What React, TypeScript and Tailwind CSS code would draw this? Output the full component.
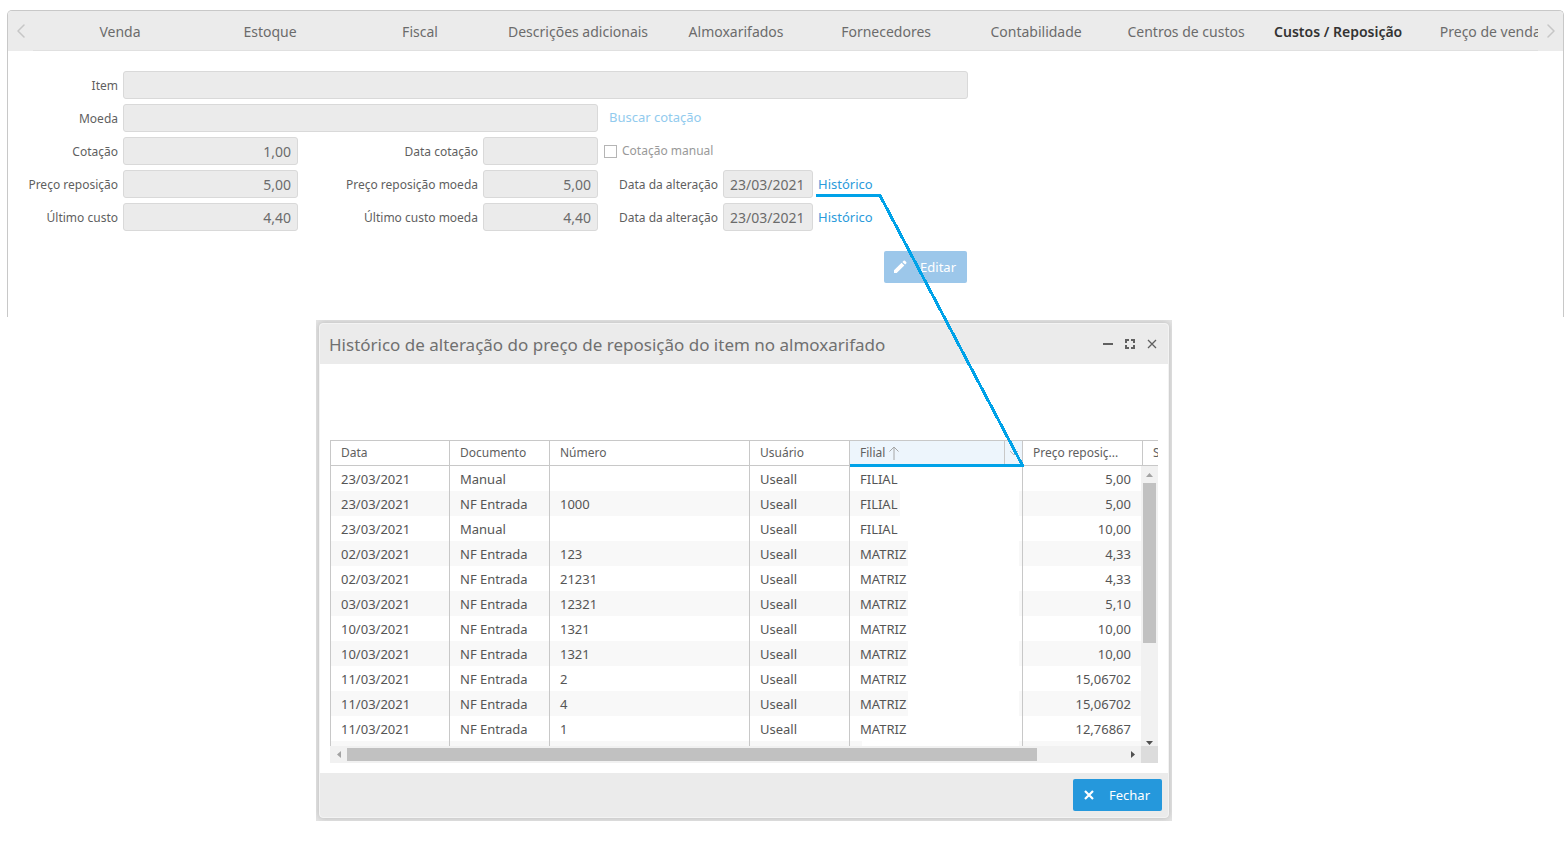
import { ReactNode } from 'react';
import { ChevronLeft, ChevronRight } from 'lucide-react';
import clsx from 'clsx';

const TABS = [
  'Venda',
  'Estoque',
  'Fiscal',
  'Descrições adicionais',
  'Almoxarifados',
  'Fornecedores',
  'Contabilidade',
  'Centros de custos',
  'Custos / Reposição',
  'Preço de venda',
];

const ACTIVE_TAB = 'Custos / Reposição';

type HistoryRow = {
  date: string;
  document: string;
  number: string;
  user: string;
  branch: string;
  price: string;
};

const ROWS: HistoryRow[] = [
  { date: '23/03/2021', document: 'Manual', number: '', user: 'Useall', branch: 'FILIAL', price: '5,00' },
  { date: '23/03/2021', document: 'NF Entrada', number: '1000', user: 'Useall', branch: 'FILIAL', price: '5,00' },
  { date: '23/03/2021', document: 'Manual', number: '', user: 'Useall', branch: 'FILIAL', price: '10,00' },
  { date: '02/03/2021', document: 'NF Entrada', number: '123', user: 'Useall', branch: 'MATRIZ', price: '4,33' },
  { date: '02/03/2021', document: 'NF Entrada', number: '21231', user: 'Useall', branch: 'MATRIZ', price: '4,33' },
  { date: '03/03/2021', document: 'NF Entrada', number: '12321', user: 'Useall', branch: 'MATRIZ', price: '5,10' },
  { date: '10/03/2021', document: 'NF Entrada', number: '1321', user: 'Useall', branch: 'MATRIZ', price: '10,00' },
  { date: '10/03/2021', document: 'NF Entrada', number: '1321', user: 'Useall', branch: 'MATRIZ', price: '10,00' },
  { date: '11/03/2021', document: 'NF Entrada', number: '2', user: 'Useall', branch: 'MATRIZ', price: '15,06702' },
  { date: '11/03/2021', document: 'NF Entrada', number: '4', user: 'Useall', branch: 'MATRIZ', price: '15,06702' },
  { date: '11/03/2021', document: 'NF Entrada', number: '1', user: 'Useall', branch: 'MATRIZ', price: '12,76867' },
  { date: '', document: '', number: '', user: '', branch: '', price: '' },
];

function Field({
  id,
  label,
  value = '',
  align = 'right',
  className,
}: {
  id: string;
  label: string;
  value?: string;
  align?: 'left' | 'right';
  className?: string;
}) {
  return (
    <>
      <label htmlFor={id} className="pt-[2px] text-right whitespace-nowrap">
        {label}
      </label>
      <input
        id={id}
        type="text"
        readOnly
        defaultValue={value}
        className={clsx(
          'h-7 w-full min-w-0 rounded-[3px] border border-[#d9d9d9] bg-[#ebebeb] px-[6px] text-[14px] text-[#6b6b6b] outline-none',
          align === 'right' ? 'text-right' : 'text-left',
          className,
        )}
      />
    </>
  );
}

function HistoryLink() {
  return (
    <a href="#historico" className="pt-[2px] text-[13px] text-[#2b9bdb]">
      Histórico
    </a>
  );
}

function Tabs() {
  return (
    <nav className="flex h-10 rounded-t-[4px] bg-[#ebebeb]">
      <button type="button" aria-label="Anterior" className="flex w-[25px] shrink-0 items-center justify-center text-[#c6c6c6]">
        <ChevronLeft className="h-6 w-6" strokeWidth={1.5} />
      </button>
      <div role="tablist" className="flex min-w-0 flex-1 overflow-hidden border-b border-[#e0e0e0] pl-3">
        {TABS.map((tab) => (
          <button
            key={tab}
            type="button"
            role="tab"
            aria-selected={tab === ACTIVE_TAB}
            className={clsx(
              'min-w-[150px] shrink-0 px-[13px] pt-[2px] text-[14px] whitespace-nowrap',
              tab === ACTIVE_TAB ? 'px-0 font-semibold text-[#333333]' : 'text-[#6b6b6b]',
            )}
          >
            {tab}
          </button>
        ))}
      </div>
      <button type="button" aria-label="Próximo" className="flex w-[25px] shrink-0 items-center justify-center text-[#c6c6c6]">
        <ChevronRight className="h-6 w-6" strokeWidth={1.5} />
      </button>
    </nav>
  );
}

function CostForm() {
  return (
    <form className="w-full max-w-[960px] pt-5 text-[12px] text-[#5f5f5f]">
      <div className="grid grid-cols-[110fr_175fr_175fr_115fr_115fr_90fr_150fr] items-center gap-[5px]">
        <Field id="item" label="Item" className="col-span-6" />

        <Field id="moeda" label="Moeda" className="col-span-3" />
        <a href="#cotacao" className="col-span-3 pl-[6px] text-[13px] text-[#92cbee]">
          Buscar cotação
        </a>

        <Field id="cotacao" label="Cotação" value="1,00" />
        <Field id="data-cotacao" label="Data cotação" />
        <label className="col-span-3 flex items-center gap-[5px] pl-px text-[#999999]">
          <input type="checkbox" className="h-[13px] w-[13px] appearance-none border border-[#b5b5b5] bg-white" />
          Cotação manual
        </label>

        <Field id="preco" label="Preço reposição" value="5,00" />
        <Field id="preco-moeda" label="Preço reposição moeda" value="5,00" />
        <Field id="preco-data" label="Data da alteração" value="23/03/2021" align="left" />
        <HistoryLink />

        <Field id="custo" label="Último custo" value="4,40" />
        <Field id="custo-moeda" label="Último custo moeda" value="4,40" />
        <Field id="custo-data" label="Data da alteração" value="23/03/2021" align="left" />
        <HistoryLink />
      </div>
      <div className="mt-5 flex justify-end pr-px">
        <button
          type="button"
          className="flex h-8 w-[83px] items-center justify-between rounded-[2px] bg-[#9cc7ea] pr-[11px] pl-[9px] text-[13px] text-white"
        >
          <svg viewBox="0 0 14 14" className="h-[14px] w-[14px]" fill="currentColor" aria-hidden="true">
            <path d="M1 10.3 8.6 2.7 11.3 5.4 3.7 13H1zM9.4 1.9 10.6.8a1 1 0 0 1 1.4 0L13.2 2a1 1 0 0 1 0 1.4L12.1 4.6z" />
          </svg>
          <span className="pt-[2px]">Editar</span>
        </button>
      </div>
    </form>
  );
}

function Columns({ last }: { last: ReactNode }) {
  return (
    <colgroup>
      <col className="w-[119px]" />
      <col className="w-[100px]" />
      <col className="w-[200px]" />
      <col className="w-[100px]" />
      <col />
      {last}
    </colgroup>
  );
}

function HistoryGrid() {
  const head = 'overflow-hidden border-l border-[#c8c8c8] pl-[10px] font-normal whitespace-nowrap';
  const cell = 'overflow-hidden border-l border-[#c8c8c8] px-[10px] pt-[2px] whitespace-nowrap';

  return (
    <div className="mx-[10px] overflow-hidden">
      <table className="w-full table-fixed border-separate border-spacing-0 border-y border-[#c8c8c8] text-left text-[12px] text-[#606060]">
        <Columns
          last={
            <>
              <col className="w-[120px]" />
              <col className="w-[16px]" />
            </>
          }
        />
        <thead>
          <tr className="h-6">
            <th className={head}>Data</th>
            <th className={head}>Documento</th>
            <th className={head}>Número</th>
            <th className={head}>Usuário</th>
            <th className={clsx(head, 'bg-[#edf5fc]')}>
              <div className="flex h-6 items-center">
                Filial
                <svg viewBox="0 0 12 16" className="ml-[3px] h-4 w-3" fill="none" stroke="#a6a6a6" aria-hidden="true">
                  <path d="M6 15V2M1.5 6.5 6 2l4.500 4.500" />
                </svg>
                <span className="ml-auto flex h-full w-[18px] items-center justify-center border-l border-[#c8c8c8]">
                  <svg viewBox="0 0 10 6" className="h-[6px] w-[10px]" fill="none" stroke="#b5b5b5" aria-hidden="true">
                    <path d="m1 1 4 4 4-4" />
                  </svg>
                </span>
              </div>
            </th>
            <th className={head}>Preço reposiç...</th>
            <th className={head}>S</th>
          </tr>
        </thead>
      </table>

      <div className="flex h-[280px]">
        <div className="min-w-0 flex-1 overflow-hidden">
          <table className="w-full table-fixed border-separate border-spacing-0 text-[13px] text-[#555555]">
            <Columns last={<col className="w-[119px]" />} />
            <tbody>
              {ROWS.map((row, i) => (
                <tr key={i} className="h-[25px] even:bg-[#f8f8f8]">
                  <td className={cell}>{row.date}</td>
                  <td className={cell}>{row.document}</td>
                  <td className={cell}>{row.number}</td>
                  <td className={cell}>{row.user}</td>
                  <td className="border-l border-[#c8c8c8] pr-[3px] pl-[10px]">
                    <div className="flex h-[25px] items-center">
                      <span className="pt-[2px]">{row.branch}</span>
                      <span className="ml-[2px] h-full flex-1 bg-white" />
                    </div>
                  </td>
                  <td className={clsx(cell, 'text-right')}>{row.price}</td>
                </tr>
              ))}
            </tbody>
          </table>
        </div>
        <div className="flex w-[17px] flex-col items-center bg-[#f1f1f1]">
          <span className="flex h-[17px] items-center">
            <svg viewBox="0 0 7 4" className="h-1 w-[7px]" fill="#a3a3a3" aria-hidden="true">
              <path d="M0 4 3.500 0 7 4z" />
            </svg>
          </span>
          <span className="h-[160px] w-[13px] bg-[#c1c1c1]" />
          <span className="mt-auto pb-px">
            <svg viewBox="0 0 7 4" className="h-1 w-[7px]" fill="#505050" aria-hidden="true">
              <path d="M0 0h7L3.500 4z" />
            </svg>
          </span>
        </div>
      </div>

      <div className="flex h-[17px] items-center bg-[#f1f1f1]">
        <span className="flex w-[17px] shrink-0 justify-center">
          <svg viewBox="0 0 4 7" className="h-[7px] w-1" fill="#a3a3a3" aria-hidden="true">
            <path d="M4 0v7L0 3.500z" />
          </svg>
        </span>
        <span className="h-[13px] w-[690px] bg-[#c1c1c1]" />
        <span className="ml-auto flex w-[17px] shrink-0 justify-center">
          <svg viewBox="0 0 4 7" className="h-[7px] w-1" fill="#505050" aria-hidden="true">
            <path d="M0 0v7l4-3.500z" />
          </svg>
        </span>
        <span className="h-full w-[17px] shrink-0 bg-[#dcdcdc]" />
      </div>
    </div>
  );
}

function HistoryDialog() {
  return (
    <div className="mt-[3px] ml-[316px] w-[856px] overflow-hidden bg-[#e4e4e4] p-[3px]">
      <section
        role="dialog"
        aria-labelledby="dialog-title"
        className="rounded-[4px] border border-[#f3f3f3] bg-white shadow-[0_0_6px_#b8b8b8]"
      >
        <header className="flex h-10 items-center rounded-t-[3px] bg-[#ebebeb] pr-[9px] pl-[9px]">
          <h2 id="dialog-title" className="pt-[2px] text-[17px] text-[#707070]">
            Histórico de alteração do preço de reposição do item no almoxarifado
          </h2>
          <div className="ml-auto flex gap-2 text-[#606060]">
            <button type="button" aria-label="Minimizar" className="h-[14px] w-[14px]">
              <svg viewBox="0 0 14 14" fill="none" stroke="currentColor" strokeWidth="2">
                <path d="M2 7h10" />
              </svg>
            </button>
            <button type="button" aria-label="Maximizar" className="h-[14px] w-[14px]">
              <svg viewBox="0 0 14 14" fill="none" stroke="currentColor" strokeWidth="2">
                <path d="M3 6V3h3M8 3h3v3M11 8v3H8M6 11H3V8" />
              </svg>
            </button>
            <button type="button" aria-label="Fechar janela" className="h-[14px] w-[14px]">
              <svg viewBox="0 0 14 14" fill="none" stroke="currentColor" strokeWidth="1.300">
                <path d="m3 3 8 8M11 3l-8 8" />
              </svg>
            </button>
          </div>
        </header>
        <div className="pt-[76px] pb-[10px]">
          <HistoryGrid />
        </div>
        <footer className="flex h-11 items-center justify-end rounded-b-[3px] bg-[#ebebeb] pr-[6px]">
          <button
            type="button"
            className="flex h-8 w-[89px] items-center justify-between rounded-[2px] bg-[#2598dc] pr-3 pl-[10px] text-[13px] text-white"
          >
            <svg viewBox="0 0 12 12" className="h-3 w-3" fill="none" stroke="currentColor" strokeWidth="2.200" aria-hidden="true">
              <path d="m2 2 8 8M10 2l-8 8" />
            </svg>
            <span className="pt-[2px]">Fechar</span>
          </button>
        </footer>
      </section>
    </div>
  );
}

// Callout that links the "Histórico" link to the sorted column of the dialog.
function Callout() {
  return (
    <svg
      className="pointer-events-none absolute top-[190px] left-[810px] h-[280px] w-[220px]"
      viewBox="810 190 220 280"
      fill="none"
      stroke="#00a2e8"
      strokeWidth="3"
      strokeLinejoin="round"
      shapeRendering="crispEdges"
      aria-hidden="true"
    >
      <path d="M816 195.500H880L1022.500 465.500H850" />
    </svg>
  );
}

export default function App() {
  return (
    <main className="relative overflow-x-hidden bg-white pt-[10px] pb-8 font-['Noto_Sans','Open_Sans',sans-serif]">
      <div className="mr-1 ml-[7px] min-h-[307px] rounded-t-[5px] border border-b-0 border-[#c8c8c8]">
        <Tabs />
        <CostForm />
      </div>
      <HistoryDialog />
      <Callout />
    </main>
  );
}
